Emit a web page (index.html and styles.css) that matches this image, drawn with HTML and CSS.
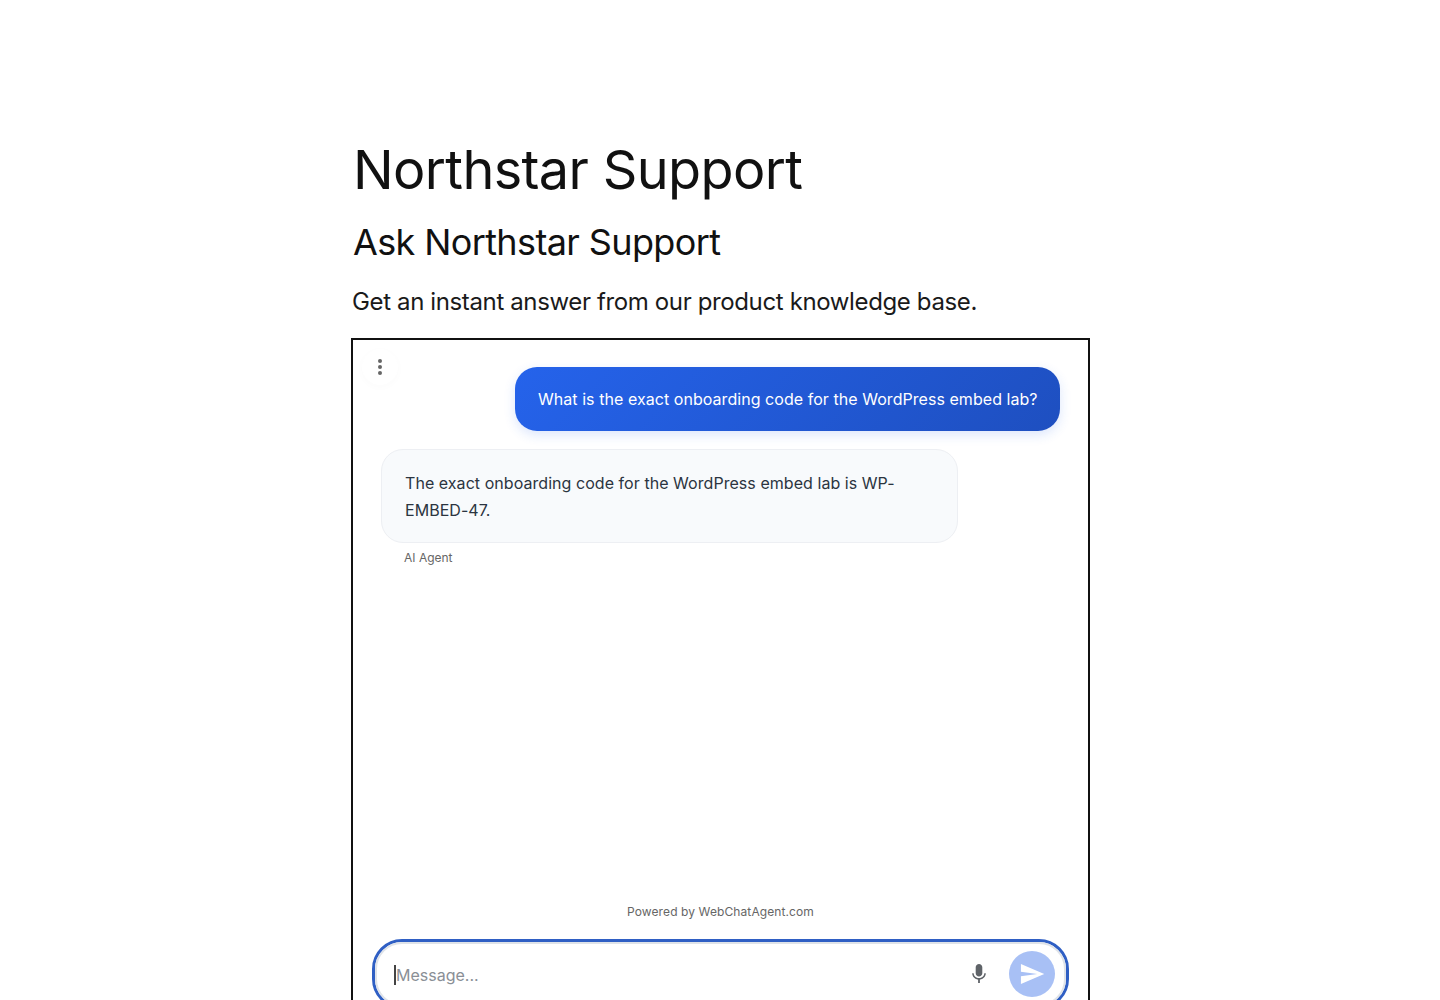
FILE: index.html
```html
<!DOCTYPE html>
<html lang="en">
<head>
<meta charset="utf-8">
<title>Northstar Support</title>
<link rel="stylesheet" href="styles.css">
</head>
<body>
<main class="page">
  <h1 class="title">Northstar Support</h1>
  <h2 class="subtitle">Ask Northstar Support</h2>
  <p class="lead">Get an instant answer from our product knowledge base.</p>
  <section class="frame">
    <button class="menu" aria-label="Menu"><span></span><span></span><span></span></button>
    <div class="messages">
      <div class="user-bubble">What is the exact onboarding code for the WordPress embed lab?</div>
      <div class="bot-bubble">The exact onboarding code for the WordPress embed lab is WP-EMBED-47.</div>
      <div class="bot-label">AI Agent</div>
    </div>
    <div class="powered">Powered by WebChatAgent.com</div>
    <div class="composer">
      <div class="composer-inner">
        <span class="caret"></span>
        <span class="placeholder">Message...</span>
        <svg class="mic" viewBox="0 0 24 24" width="24" height="24"><path fill="#5f6368" d="M12 14.500c1.800 0 3.300-1.400 3.300-3.200V5.200C15.300 3.400 13.800 2 12 2S8.700 3.400 8.700 5.200v6.100c0 1.800 1.500 3.200 3.300 3.200zm5.300-3.200c0 3-2.500 4.800-5.300 4.800s-5.300-1.800-5.300-4.800H5.200c0 3.400 2.700 5.900 5.900 6.400V21h1.800v-3.300c3.200-.5 5.900-3 5.900-6.400h-1.500z"/></svg>
        <div class="send">
          <svg viewBox="0 0 24 24" width="28" height="28"><path fill="#fff" d="M2.500 20.500 22.500 12 2.500 3.500v6.600L16.500 12 2.500 13.900z"/></svg>
        </div>
      </div>
    </div>
  </section>
</main>
</body>
</html>
```
FILE: styles.css
```css
html, body {
  margin: 0;
  padding: 0;
  background: #fff;
  height: 1000px;
  overflow: hidden;
}
body {
  font-family: "Inter", "Liberation Sans", sans-serif;
  color: #111;
}
.page {
  width: 739px;
  margin: 0 0 0 351px;
  padding-top: 136px;
}
.title {
  margin: 0;
  font-size: 54px;
  line-height: 68px;
  font-weight: 400;
  letter-spacing: -0.63px;
  padding-left: 2px;
}
.subtitle {
  margin: 14px 0 0;
  font-size: 36px;
  line-height: 48px;
  font-weight: 400;
  letter-spacing: -0.62px;
  padding-left: 2px;
}
.lead {
  margin: 19px 0 0;
  font-size: 24px;
  line-height: 34px;
  letter-spacing: -0.37px;
  padding-left: 1px;
  color: #1a1a1a;
}
.frame {
  position: relative;
  box-sizing: border-box;
  margin-top: 19px;
  height: 720px;
  border: 2px solid #111;
  background: #fff;
  display: flex;
  flex-direction: column;
}
.menu {
  position: absolute;
  left: 9px;
  top: 9px;
  width: 36px;
  height: 36px;
  border: 0;
  border-radius: 50%;
  background: #fff;
  box-shadow: 0 2px 8px rgba(0, 0, 0, 0.02);
  display: flex;
  flex-direction: column;
  gap: 2px;
  align-items: center;
  justify-content: center;
  padding: 0;
}
.menu span {
  width: 4px;
  height: 4px;
  border-radius: 50%;
  background: #666;
}
.messages {
  height: 551px;
  box-sizing: border-box;
  padding: 27px 28px 0;
  display: flex;
  flex-direction: column;
  align-items: flex-start;
}
.user-bubble {
  align-self: flex-end;
  box-sizing: border-box;
  width: 545px;
  height: 64px;
  padding: 0 22px 0 23px;
  display: flex;
  align-items: center;
  border-radius: 22px;
  background: linear-gradient(135deg, #2563eb, #1e4fc0);
  box-shadow: 0 4px 12px rgba(37, 99, 235, 0.16);
  color: #fff;
  font-size: 16px;
  letter-spacing: 0.05px;
  white-space: nowrap;
}
.bot-bubble {
  box-sizing: border-box;
  width: 577px;
  margin-top: 18px;
  padding: 20px 23px 18px;
  border: 1px solid #edeff3;
  border-radius: 22px;
  background: #f8fafc;
  color: #2b3440;
  font-size: 16px;
  line-height: 27px;
  letter-spacing: 0.05px;
}
.bot-label {
  margin: 7px 0 0 23px;
  font-size: 12px;
  line-height: 16px;
  color: #666;
}
.powered {
  margin-top: 13px;
  text-align: center;
  font-size: 12px;
  line-height: 16px;
  color: #666;
  letter-spacing: 0.1px;
}
.composer {
  margin: 19px 19px 0;
  box-sizing: border-box;
  height: 70px;
  border: 3px solid #2f5fc4;
  border-radius: 30px;
  flex: none;
}
.composer-inner {
  box-sizing: border-box;
  height: 100%;
  border: 2px solid #dfe3e8;
  border-radius: 27px;
  display: flex;
  align-items: center;
  padding: 0 9px 0 17px;
}
.caret {
  width: 2px;
  height: 20px;
  margin-top: 2px;
  background: #444;
  flex: none;
}
.placeholder {
  flex: 1;
  padding-top: 2px;
  color: #8a8f96;
  font-size: 16px;
}
.mic {
  flex: none;
  margin-right: 18px;
}
.send {
  width: 46px;
  height: 46px;
  border-radius: 50%;
  background: #a8c0f5;
  display: flex;
  align-items: center;
  justify-content: center;
  flex: none;
}
```
